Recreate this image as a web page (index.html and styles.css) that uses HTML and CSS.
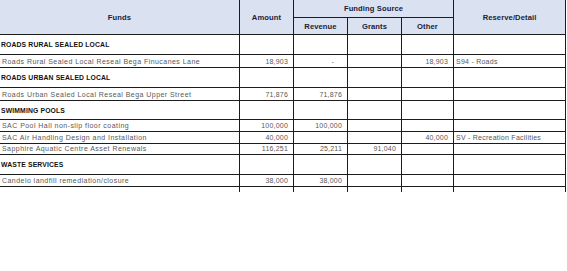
FILE: index.html
```html
<!DOCTYPE html>
<html>
<head>
<meta charset="utf-8">
<link rel="stylesheet" href="styles.css">
</head>
<body>
<div class="sheet">
  <div class="head">
    <div class="hc funds">Funds</div>
    <div class="hc amount">Amount</div>
    <div class="hc source">Funding Source</div>
    <div class="hc reserve">Reserve/Detail</div>
    <div class="hc sub">Revenue</div>
    <div class="hc sub">Grants</div>
    <div class="hc sub">Other</div>
  </div>

  <div class="row sec h20"><div class="c name">ROADS RURAL SEALED LOCAL</div><div class="c"></div><div class="c"></div><div class="c"></div><div class="c"></div><div class="c"></div></div>
  <div class="row item h13"><div class="c name">Roads Rural Sealed Local Reseal Bega Finucanes Lane</div><div class="c num">18,903</div><div class="c num dash">-</div><div class="c"></div><div class="c num">18,903</div><div class="c txt">S94 - Roads</div></div>

  <div class="row sec h20"><div class="c name">ROADS URBAN SEALED LOCAL</div><div class="c"></div><div class="c"></div><div class="c"></div><div class="c"></div><div class="c"></div></div>
  <div class="row item h13"><div class="c name">Roads Urban Sealed Local Reseal Bega Upper Street</div><div class="c num">71,876</div><div class="c num">71,876</div><div class="c"></div><div class="c"></div><div class="c"></div></div>

  <div class="row sec h19"><div class="c name">SWIMMING POOLS</div><div class="c"></div><div class="c"></div><div class="c"></div><div class="c"></div><div class="c"></div></div>
  <div class="row item h12"><div class="c name">SAC Pool Hall non-slip floor coating</div><div class="c num">100,000</div><div class="c num">100,000</div><div class="c"></div><div class="c"></div><div class="c"></div></div>
  <div class="row item h12"><div class="c name">SAC Air Handling Design and Installation</div><div class="c num">40,000</div><div class="c"></div><div class="c"></div><div class="c num">40,000</div><div class="c txt">SV - Recreation Facilities</div></div>
  <div class="row item h11"><div class="c name">Sapphire Aquatic Centre Asset Renewals</div><div class="c num">116,251</div><div class="c num">25,211</div><div class="c num">91,040</div><div class="c"></div><div class="c"></div></div>

  <div class="row sec h20"><div class="c name">WASTE SERVICES</div><div class="c"></div><div class="c"></div><div class="c"></div><div class="c"></div><div class="c"></div></div>
  <div class="row item h12"><div class="c name">Candelo landfill remediation/closure</div><div class="c num">38,000</div><div class="c num">38,000</div><div class="c"></div><div class="c"></div><div class="c"></div></div>
  <div class="row tail"><div class="c"></div><div class="c"></div><div class="c"></div><div class="c"></div><div class="c"></div><div class="c"></div></div>
</div>
</body>
</html>
```

FILE: styles.css
```css
html, body {
  margin: 0;
  padding: 0;
  background: #ffffff;
}

.sheet {
  width: 566px;
  font-family: "Liberation Sans", Arial, sans-serif;
  color: #222;
}

.head {
  display: grid;
  grid-template-columns: 240px 54px 54px 54px 52px 112px;
  grid-template-rows: 18px 17px;
  background: #dae2f2;
}

.hc {
  box-sizing: border-box;
  display: flex;
  align-items: center;
  justify-content: center;
  border-right: 1px solid #1c1c1c;
  border-bottom: 1px solid #1c1c1c;
  font-weight: bold;
  font-size: 7.6px;
  color: #1b2136;
  letter-spacing: 0.1px;
}

.funds { grid-column: 1; grid-row: 1 / 3; }
.amount { grid-column: 2; grid-row: 1 / 3; }
.source { grid-column: 3 / 6; grid-row: 1; }
.reserve { grid-column: 6; grid-row: 1 / 3; }

.row {
  display: grid;
  grid-template-columns: 240px 54px 54px 54px 52px 112px;
  box-sizing: border-box;
  border-bottom: 1px solid #1c1c1c;
}

.h20 { height: 20px; }
.h19 { height: 19px; }
.h13 { height: 13px; }
.h12 { height: 12px; }
.h11 { height: 11px; }

.row.tail {
  height: 5px;
  border-bottom: none;
}

.c {
  box-sizing: border-box;
  border-right: 1px solid #1c1c1c;
  display: flex;
  align-items: flex-end;
  white-space: nowrap;
  overflow: hidden;
}

.sec .c {
  align-items: center;
}

.sec .name {
  font-weight: bold;
  font-size: 6.8px;
  color: #111;
  padding-left: 1px;
  letter-spacing: 0.15px;
}

.item .c {
  font-size: 7px;
  color: #585858;
  line-height: 8px;
  padding-bottom: 1px;
}

.item .name {
  padding-left: 2px;
  letter-spacing: 0.45px;
}

.item .num {
  justify-content: flex-end;
  padding-right: 5px;
  letter-spacing: 0.2px;
}

.item .num.dash {
  padding-right: 13px;
}

.item .txt {
  padding-left: 2px;
  letter-spacing: 0.25px;
}
```
